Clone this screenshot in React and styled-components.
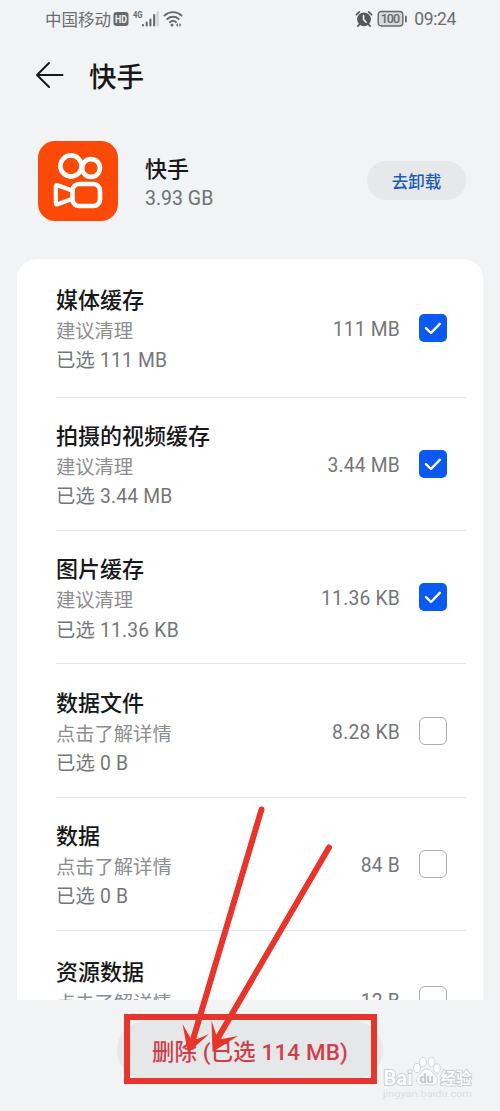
import React, { useState } from "react";
import styled, { createGlobalStyle } from "styled-components";

const GlobalStyle = createGlobalStyle`
  * {
    box-sizing: border-box;
  }
  body {
    margin: 0;
    background-color: #f1f3f5;
    font-family: Roboto, "Noto Sans CJK SC", sans-serif;
  }
`;

const Screen = styled.div`
  position: relative;
  display: flex;
  flex-direction: column;
  width: 500px;
  height: 1111px;
  overflow: hidden;
  background-color: #f1f3f5;
`;

const StatusBar = styled.div`
  display: flex;
  align-items: center;
  justify-content: space-between;
  height: 37px;
  padding: 0 44px 0 45px;
  color: #6b6d70;
  font-size: 16.5px;
`;

const StatusGroup = styled.div`
  display: flex;
  align-items: center;
`;

const Clock = styled.span`
  margin-left: 6px;
  font-size: 17.5px;
  letter-spacing: -0.35px;
`;

const TitleBar = styled.header`
  display: flex;
  align-items: center;
  gap: 25px;
  height: 76px;
  padding-left: 35px;
`;

const PageTitle = styled.h1`
  margin: 0;
  color: #17181a;
  font-size: 27.5px;
  font-weight: 500;
`;

const AppRow = styled.section`
  display: flex;
  align-items: center;
  height: 135px;
  padding: 0 34px 0 38px;
`;

const AppText = styled.div`
  flex: 1;
  padding: 6px 0 0 27px;
`;

const AppName = styled.div`
  color: #17181a;
  font-size: 22px;
  font-weight: 500;
  line-height: 30px;
`;

const AppSize = styled.div`
  color: #6f7173;
  font-size: 19.5px;
  line-height: 28px;
`;

const UninstallButton = styled.button`
  width: 99px;
  height: 39px;
  padding: 0;
  border: none;
  border-radius: 20px;
  background-color: #e6e8ea;
  color: #1c5cb8;
  font-family: inherit;
  font-size: 16.5px;
  font-weight: 500;
`;

const List = styled.main`
  height: 741px;
  margin: 11px 17px 0;
  padding: 0 17px 0 39px;
  border-radius: 20px 20px 0 0;
  background-color: #fff;
  overflow: hidden;
`;

const Item = styled.div`
  display: flex;
  align-items: center;
  height: ${(props) => props.$height || 133.4}px;
  padding-right: 19px;
  border-bottom: 1.4px solid #e7e8e9;
`;

const ItemText = styled.div`
  flex: 1;
  padding-top: 5px;
`;

const ItemTitle = styled.div`
  color: #17181a;
  font-size: 22px;
  font-weight: 500;
  line-height: 32px;
`;

const ItemLine = styled.div`
  color: ${(props) => (props.$light ? "#8b8d8f" : "#747678")};
  font-size: 19.3px;
  line-height: 29.5px;
  letter-spacing: ${(props) => (props.$light ? 0 : "0.2px")};
`;

const ItemSize = styled.span`
  padding-top: 3px;
  color: #747678;
  font-size: 19.3px;
  letter-spacing: 0.2px;
`;

const CheckBox = styled.button`
  display: flex;
  align-items: center;
  justify-content: center;
  width: 28px;
  height: 28px;
  margin-left: 19px;
  padding: 0;
  border: ${(props) => (props.$checked ? "none" : "1.5px solid #acaeb0")};
  border-radius: ${(props) => (props.$checked ? "5px" : "6px")};
  background-color: ${(props) => (props.$checked ? "#0a59f0" : "#fff")};
`;

const Footer = styled.footer`
  display: flex;
  flex: 1;
  justify-content: center;
  padding-top: 21px;
`;

const DeleteButton = styled.button`
  width: 266px;
  height: 58px;
  padding: 0;
  border: none;
  border-radius: 29px;
  background-color: #e5e7e9;
  color: #cf3f4b;
  font-family: inherit;
  font-size: 22.4px;
  font-weight: 500;
  letter-spacing: 0.15px;
`;

const Marker = styled.svg`
  position: absolute;
  left: 0;
  top: 0;
  pointer-events: none;
`;

const Highlight = styled.div`
  position: absolute;
  left: 124px;
  top: 1014px;
  width: 253px;
  height: 70px;
  border: 6px solid #e8352c;
`;

const items = [
  { title: "媒体缓存", hint: "建议清理", size: "111 MB", height: 138.6, checked: true },
  { title: "拍摄的视频缓存", hint: "建议清理", size: "3.44 MB", checked: true },
  { title: "图片缓存", hint: "建议清理", size: "11.36 KB", checked: true },
  { title: "数据文件", hint: "点击了解详情", size: "8.28 KB" },
  { title: "数据", hint: "点击了解详情", size: "84 B" },
  { title: "资源数据", hint: "点击了解详情", size: "12 B", height: 138 },
];

const SignalIcons = () => (
  <svg width="72" height="22" viewBox="0 0 72 22">
    <rect x="2.5" y="4" width="15" height="14" rx="3" fill="#66686b" />
    <text x="4" y="14.6" fontSize="10" fontWeight="700" fill="#f1f3f5" textLength="12" lengthAdjust="spacingAndGlyphs">HD</text>
    <text x="22" y="10" fontSize="9" fontWeight="700" fill="#66686b" textLength="9.5" lengthAdjust="spacingAndGlyphs">4G</text>
    <g stroke="#66686b" strokeWidth="2.1" strokeLinecap="round">
      <path d="M32 17v.5M35.7 14.5v3M39.4 11.5v6M43.2 7v10.5" />
      <path d="M46.7 4v13.5" stroke="#cfd1d3" />
    </g>
    <g fill="none" stroke="#66686b" strokeWidth="1.9" strokeLinecap="round">
      <path d="M53.5 7.5a12.5 12.5 0 0 1 17 0M56.3 11a8.5 8.5 0 0 1 11.4 0M59 14.2a4.5 4.5 0 0 1 6 0" />
    </g>
    <circle cx="61" cy="17" r="1.5" fill="#66686b" />
    <path d="M67 15v4l-2-2zM68.4 15v4l2-2z" fill="#66686b" />
  </svg>
);

const AlarmIcon = () => (
  <svg width="18" height="18" viewBox="0 0 18 18">
    <circle cx="9" cy="9.3" r="6.9" fill="#55575a" />
    <path d="M1.4 4.6 4.4 1.9M16.6 4.6l-3-2.7M4.6 14.2l-1.7 1.9M13.4 14.2l1.7 1.9" stroke="#55575a" strokeWidth="1.7" strokeLinecap="round" />
    <path d="M8.6 5.6v4l2.6 2.6" fill="none" stroke="#f1f3f5" strokeWidth="1.6" strokeLinecap="round" />
  </svg>
);

const BatteryIcon = () => (
  <svg width="31" height="18" viewBox="0 0 31 18">
    <rect x="1.2" y="1.5" width="24.6" height="14.5" rx="3.2" fill="#d7d9db" stroke="#66686b" strokeWidth="1.4" />
    <rect x="28" y="5.5" width="1.8" height="7" rx="0.9" fill="#66686b" />
    <text x="13.4" y="13.2" textAnchor="middle" fontSize="12.5" fontWeight="500" fill="#66686b" textLength="19.5">100</text>
  </svg>
);

const BackIcon = () => (
  <svg width="29" height="28" viewBox="0 0 29 28" fill="none" stroke="#17181a" strokeWidth="2" strokeLinecap="round" strokeLinejoin="round">
    <path d="M27.5 14H2M14 2 2 14l12 12" />
  </svg>
);

const AppLogo = () => (
  <svg width="80" height="80" viewBox="0 0 80 80">
    <rect width="80" height="80" rx="17" fill="#fb4a08" />
    <g fill="none" stroke="#fff" strokeWidth="4.6" strokeLinejoin="round">
      <circle cx="33" cy="25" r="10.6" />
      <circle cx="53" cy="27" r="8.9" />
      <rect x="34.5" y="43" width="27.5" height="22" rx="6.5" />
      <path d="M34 49.5 19.5 44.3c-1.2-.4-1.7 0-1.7 1.2v16.6c0 1.2.5 1.600 1.7 1.2L34 58" strokeWidth="4.2" />
    </g>
  </svg>
);

const CheckIcon = () => (
  <svg width="28" height="28" viewBox="0 0 28 28" fill="none" stroke="#fff" strokeWidth="2.4" strokeLinecap="round" strokeLinejoin="round">
    <path d="m7 14.2 5 4.8 8.8-9.2" />
  </svg>
);

const Arrows = () => (
  <Marker width="500" height="1111" viewBox="0 0 500 1111" fill="#e8352c">
    <g stroke="#e8352c" strokeWidth="6" strokeLinecap="round">
      <path d="M261.5 809.5 193.5 1038" />
      <path d="M329 847.5 218.5 1037" />
    </g>
    <path d="M188 1053 182.5 1024 190.5 1038 197.5 1039 209 1034z" />
    <path d="M212.5 1052 211.5 1020.5 216 1034 222 1039 238 1036z" />
  </Marker>
);

const Watermark = () => (
  <Marker width="500" height="1111" viewBox="0 0 500 1111">
    <text x="383" y="1097" fontSize="9.5" fill="#dcdee0" textLength="89" lengthAdjust="spacingAndGlyphs">jingyan.baidu.com</text>
    <g fill="#fafbfb" stroke="#cfd1d3" strokeWidth="0.9">
      <ellipse cx="417" cy="1068" rx="3.3" ry="4.6" />
      <ellipse cx="423" cy="1062" rx="3.5" ry="4.8" />
      <ellipse cx="431.5" cy="1062" rx="3.5" ry="4.8" />
      <ellipse cx="437" cy="1068.5" rx="3.3" ry="4.6" />
      <path d="M426.5 1069c-4 0-5 4-8 6.5s-3 9.5 3 9.5h11c6 0 6-7 3-9.5s-5-6.5-9-6.5z" />
    </g>
    <g fill="#fbfcfc" stroke="#c6c8cb" strokeWidth="1.6" paintOrder="stroke" fontWeight="700">
      <text x="383.5" y="1084.5" fontSize="20" textLength="29" lengthAdjust="spacingAndGlyphs">Bai</text>
      <text x="440.5" y="1084" fontSize="15.5" textLength="31">经验</text>
    </g>
    <text x="419.5" y="1083" fontSize="13" fontWeight="700" fill="#c3c5c8" textLength="14" lengthAdjust="spacingAndGlyphs">du</text>
  </Marker>
);

const App = () => {
  const [checked, setChecked] = useState(items.map((item) => !!item.checked));

  const toggle = (index) => {
    setChecked((prev) => prev.map((value, i) => (i === index ? !value : value)));
  };

  return (
    <>
      <GlobalStyle />
      <Screen>
        <StatusBar>
          <StatusGroup>
            中国移动
            <SignalIcons />
          </StatusGroup>
          <StatusGroup>
            <AlarmIcon />
            <span>&nbsp;</span>
            <BatteryIcon />
            <Clock>09:24</Clock>
          </StatusGroup>
        </StatusBar>
        <TitleBar>
          <BackIcon />
          <PageTitle>快手</PageTitle>
        </TitleBar>
        <AppRow>
          <AppLogo />
          <AppText>
            <AppName>快手</AppName>
            <AppSize>3.93 GB</AppSize>
          </AppText>
          <UninstallButton>去卸载</UninstallButton>
        </AppRow>
        <List>
          {items.map((item, index) => (
            <Item key={item.title} $height={item.height}>
              <ItemText>
                <ItemTitle>{item.title}</ItemTitle>
                <ItemLine $light>{item.hint}</ItemLine>
                <ItemLine>已选 {item.checked ? item.size : "0 B"}</ItemLine>
              </ItemText>
              <ItemSize>{item.size}</ItemSize>
              <CheckBox $checked={checked[index]} onClick={() => toggle(index)}>
                {checked[index] && <CheckIcon />}
              </CheckBox>
            </Item>
          ))}
        </List>
        <Footer>
          <DeleteButton>删除 (已选 114 MB)</DeleteButton>
        </Footer>
        <Highlight />
        <Arrows />
        <Watermark />
      </Screen>
    </>
  );
};

export default App;
